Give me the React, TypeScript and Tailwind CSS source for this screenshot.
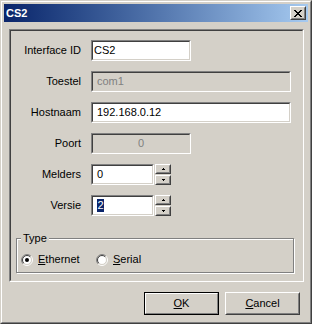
import React from "react";

function Radio({ checked }: { checked?: boolean }) {
  return (
    <svg width="12" height="12" viewBox="0 0 12 12" className="block shrink-0">
      <circle cx="6" cy="6" r="4.5" fill="#ffffff" />
      <path d="M2.111 9.889 A5.5 5.5 0 0 1 9.889 2.111" fill="none" stroke="#808080" strokeWidth="1" />
      <path d="M9.889 2.111 A5.5 5.5 0 0 1 2.111 9.889" fill="none" stroke="#ffffff" strokeWidth="1" />
      <path d="M2.818 9.182 A4.5 4.5 0 0 1 9.182 2.818" fill="none" stroke="#404040" strokeWidth="1" />
      <path d="M9.182 2.818 A4.5 4.5 0 0 1 2.818 9.182" fill="none" stroke="#d4d0c8" strokeWidth="1" />
      {checked && <circle cx="6" cy="6" r="2" fill="#000000" />}
    </svg>
  );
}

function SpinButton({ up }: { up?: boolean }) {
  return (
    <div className="w-[16px] h-[10px] border border-t-white border-l-white border-r-[#404040] border-b-[#404040] bg-[#d4d0c8]">
      <div className="w-full h-full border border-t-[#d4d0c8] border-l-[#d4d0c8] border-r-[#808080] border-b-[#808080] flex items-center justify-center">
        <svg width="5" height="3" viewBox="0 0 5 3" className="block">
          {up ? (
            <path d="M2 0h1v1h1v1H1V1h1z" fill="#000" />
          ) : (
            <path d="M1 0h3v1H3v1H2V1H1z" fill="#000" />
          )}
        </svg>
      </div>
    </div>
  );
}

function Sunken({
  className,
  disabled,
  children,
}: {
  className: string;
  disabled?: boolean;
  children?: React.ReactNode;
}) {
  return (
    <div className={"h-[21px] border border-t-[#808080] border-l-[#808080] border-r-white border-b-white " + className}>
      <div
        className={
          "w-full h-full border border-t-[#404040] border-l-[#404040] border-r-[#d4d0c8] border-b-[#d4d0c8] flex items-center " +
          (disabled ? "bg-[#d4d0c8] text-[#808080]" : "bg-white text-black")
        }
      >
        {children}
      </div>
    </div>
  );
}

function Row({ label, children }: { label: string; children: React.ReactNode }) {
  return (
    <div className="flex items-center h-[21px]">
      <div className="w-[70px] text-right text-black">{label}</div>
      <div className="ml-[10px] flex items-center">{children}</div>
    </div>
  );
}

function Spinner() {
  return (
    <div className="ml-[1px] flex flex-col gap-[1px]">
      <SpinButton up />
      <SpinButton />
    </div>
  );
}

export default function App() {
  return (
    <div
      className="w-[312px] h-[324px] bg-[#d4d0c8] border border-t-[#d4d0c8] border-l-[#d4d0c8] border-r-[#404040] border-b-[#404040] text-[11px] leading-[13px] text-black select-none"
      style={{ fontFamily: '"Liberation Sans", Arial, sans-serif' }}
    >
      <div className="w-full h-full border border-t-white border-l-white border-r-[#808080] border-b-[#808080] p-[2px] flex flex-col">
        {/* Title bar */}
        <div className="h-[18px] flex items-center bg-gradient-to-r from-[#0a246a] to-[#a6caf0] pl-[2px] pr-[2px]">
          <span className="font-bold text-white text-[11px] flex-1">CS2</span>
          <div className="w-[16px] h-[14px] border border-t-white border-l-white border-r-[#404040] border-b-[#404040] bg-[#d4d0c8]">
            <div className="w-full h-full border border-t-[#d4d0c8] border-l-[#d4d0c8] border-r-[#808080] border-b-[#808080] flex items-center justify-center">
              <svg width="8" height="7" viewBox="0 0 8 7" className="block">
                <path
                  d="M0 0h2v1h1v1h2V1h1V0h2v1H7v1H6v1H5v1h1v1h1v1h1v1H6V6H5V5H3v1H2v1H0V6h1V5h1V4h1V3H2V2H1V1H0z"
                  fill="#000"
                />
              </svg>
            </div>
          </div>
        </div>

        {/* Content */}
        <div className="flex flex-col">
          <div className="ml-[5px] mt-[7px] w-[295px] h-[253px] border border-t-[#808080] border-l-[#808080] border-r-white border-b-white">
            <div className="w-full h-full border border-t-[#404040] border-l-[#404040] border-r-[#d4d0c8] border-b-[#d4d0c8] flex flex-col">
              <div className="pt-[9px] flex flex-col gap-[10px]">
                <Row label="Interface ID">
                  <Sunken className="w-[100px]">
                    <span className="pl-[1px]">CS2</span>
                  </Sunken>
                </Row>
                <Row label="Toestel">
                  <Sunken className="w-[200px]" disabled>
                    <span className="pl-[4px]">com1</span>
                  </Sunken>
                </Row>
                <Row label="Hostnaam">
                  <Sunken className="w-[200px]">
                    <span className="pl-[4px]">192.168.0.12</span>
                  </Sunken>
                </Row>
                <Row label="Poort">
                  <Sunken className="w-[100px]" disabled>
                    <span className="w-full text-center">0</span>
                  </Sunken>
                </Row>
                <Row label="Melders">
                  <Sunken className="w-[63px]">
                    <span className="pl-[4px]">0</span>
                  </Sunken>
                  <Spinner />
                </Row>
                <Row label="Versie">
                  <Sunken className="w-[63px]">
                    <span className="ml-[4px] bg-[#0a246a] text-white px-[0.5px]">2</span>
                  </Sunken>
                  <Spinner />
                </Row>
              </div>

              {/* Type group */}
              <div className="relative ml-[5px] mt-[22px] w-[278px] h-[35px] border border-[#808080] shadow-[1px_1px_0_#ffffff,inset_1px_1px_0_#ffffff]">
                <span className="absolute left-[4px] top-[-7px] bg-[#d4d0c8] px-[2px]">Type</span>
                <div className="pl-[4px] pt-[14px] flex items-center">
                  <div className="w-[75px] flex items-center">
                    <Radio checked />
                    <span className="ml-[5px]">
                      <span className="underline">E</span>thernet
                    </span>
                  </div>
                  <div className="flex items-center">
                    <Radio />
                    <span className="ml-[5px]">
                      <span className="underline">S</span>erial
                    </span>
                  </div>
                </div>
              </div>
            </div>
          </div>

          {/* Buttons */}
          <div className="mt-[10px] flex justify-end gap-[6px] pr-[8px]">
            <div className="w-[75px] h-[23px] border border-black">
              <div className="w-full h-full border border-t-white border-l-white border-r-[#808080] border-b-[#808080] flex items-center justify-center">
                <span>
                  <span className="underline">O</span>K
                </span>
              </div>
            </div>
            <div className="w-[75px] h-[23px] border border-t-white border-l-white border-r-[#404040] border-b-[#404040]">
              <div className="w-full h-full border border-t-[#d4d0c8] border-l-[#d4d0c8] border-r-[#808080] border-b-[#808080] flex items-center justify-center">
                <span>
                  <span className="underline">C</span>ancel
                </span>
              </div>
            </div>
          </div>
        </div>
      </div>
    </div>
  );
}
